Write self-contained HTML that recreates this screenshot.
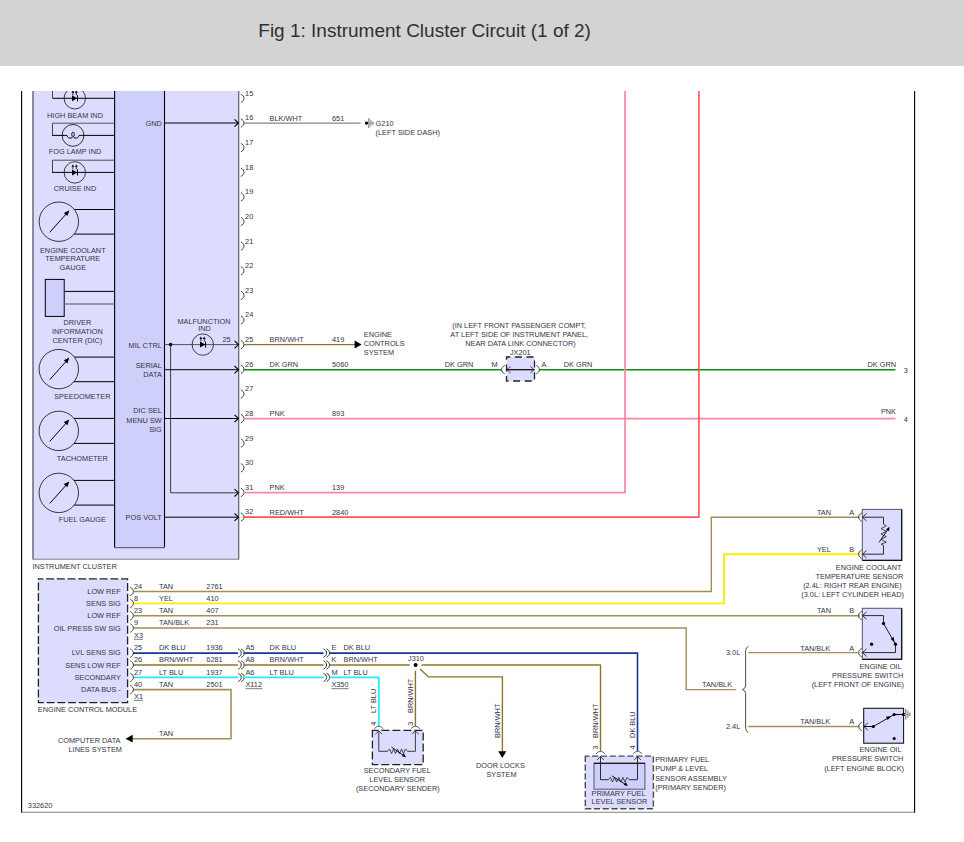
<!DOCTYPE html>
<html><head><meta charset="utf-8"><title>Fig 1: Instrument Cluster Circuit (1 of 2)</title>
<style>
html,body{margin:0;padding:0;background:#fff;}
body{width:964px;height:842px;position:relative;overflow:hidden;font-family:"Liberation Sans",sans-serif;}
#hdr{position:absolute;left:0;top:0;width:964px;height:66px;background:#d3d3d3;}
#hdr span{position:absolute;left:258.3px;top:19.6px;font-size:19px;line-height:22px;color:#303030;white-space:nowrap;}
svg{position:absolute;left:0;top:0;}
svg text{font-family:"Liberation Sans",sans-serif;fill:#343446;}
</style></head><body>
<div id="hdr"><span>Fig 1: Instrument Cluster Circuit (1 of 2)</span></div>
<svg width="964" height="842" viewBox="0 0 964 842">
<defs><clipPath id="clip"><rect x="21" y="91" width="894" height="721.5"/></clipPath></defs>
<g clip-path="url(#clip)">
<rect x="33" y="80" width="205.7" height="479.2" fill="#dcdcfe" stroke="#7c7c8c" stroke-width="1" />
<line x1="33" y1="80" x2="33" y2="559.2" stroke="#6a6a76" stroke-width="1.1" />
<line x1="238.7" y1="80" x2="238.7" y2="559.2" stroke="#666" stroke-width="1" />
<rect x="114.6" y="80" width="49.9" height="467.6" fill="#cfcffb" stroke="none" stroke-width="0" />
<line x1="114.6" y1="80" x2="114.6" y2="547.6" stroke="#000" stroke-width="1.1" />
<line x1="164.5" y1="80" x2="164.5" y2="547.6" stroke="#000" stroke-width="1.1" />
<line x1="114.6" y1="547.6" x2="164.5" y2="547.6" stroke="#666680" stroke-width="1.2" />
<line x1="52.5" y1="88" x2="52.5" y2="98.3" stroke="#333" stroke-width="0.9" />
<line x1="52.5" y1="98.3" x2="114.6" y2="98.3" stroke="#000" stroke-width="1" />
<circle cx="74.8" cy="98.3" r="10.7" fill="none" stroke="#222" stroke-width="0.85"/>
<path d="M72.0,95.3 L72.0,101.3 L77.2,98.3 Z" fill="#000"/>
<line x1="77.5" y1="95.2" x2="77.5" y2="101.39999999999999" stroke="#000" stroke-width="1" />
<line x1="72.89999999999999" y1="95.1" x2="72.89999999999999" y2="91.7" stroke="#000" stroke-width="0.8" />
<path d="M71.49999999999999,92.7 L72.89999999999999,90.3 L74.3,92.7 Z" fill="#000"/>
<line x1="76.3" y1="95.1" x2="76.3" y2="91.7" stroke="#000" stroke-width="0.8" />
<path d="M74.89999999999999,92.7 L76.3,90.3 L77.7,92.7 Z" fill="#000"/>
<text x="75" y="118.25" text-anchor="middle" font-size="7.35" >HIGH BEAM IND</text>
<line x1="52.5" y1="135.4" x2="52.5" y2="123.2" stroke="#333" stroke-width="0.9" />
<line x1="52.1" y1="135.4" x2="64" y2="135.4" stroke="#000" stroke-width="1" />
<line x1="52.5" y1="123.2" x2="114.6" y2="123.2" stroke="#444" stroke-width="0.9" />
<line x1="83" y1="135.4" x2="114.6" y2="135.4" stroke="#000" stroke-width="1" />
<circle cx="73" cy="135.4" r="10.9" fill="none" stroke="#222" stroke-width="0.9"/>
<path d="M62.5,135.4 L67,135.4 C67.5,137.6 69.2,138.5 71,138.1 C72.4,137.8 72.6,137 72.2,136.2 C71.2,134 71.8,132.2 73,132.2 C74.2,132.2 74.8,134 73.8,136.2 C73.4,137 73.6,137.8 75,138.1 C76.8,138.5 78.5,137.6 79,135.4 L84,135.4" fill="none" stroke="#000" stroke-width="0.95"/>
<text x="75" y="154.15" text-anchor="middle" font-size="7.35" >FOG LAMP IND</text>
<line x1="52.5" y1="160.2" x2="52.5" y2="172.4" stroke="#333" stroke-width="0.9" />
<line x1="52.1" y1="172.4" x2="114.6" y2="172.4" stroke="#000" stroke-width="1" />
<line x1="52.5" y1="160.2" x2="114.6" y2="160.2" stroke="#444" stroke-width="0.9" />
<circle cx="74.8" cy="172.4" r="10.7" fill="none" stroke="#222" stroke-width="0.85"/>
<path d="M72.0,169.4 L72.0,175.4 L77.2,172.4 Z" fill="#000"/>
<line x1="77.5" y1="169.3" x2="77.5" y2="175.5" stroke="#000" stroke-width="1" />
<line x1="72.89999999999999" y1="169.20000000000002" x2="72.89999999999999" y2="165.8" stroke="#000" stroke-width="0.8" />
<path d="M71.49999999999999,166.8 L72.89999999999999,164.4 L74.3,166.8 Z" fill="#000"/>
<line x1="76.3" y1="169.20000000000002" x2="76.3" y2="165.8" stroke="#000" stroke-width="0.8" />
<path d="M74.89999999999999,166.8 L76.3,164.4 L77.7,166.8 Z" fill="#000"/>
<text x="75" y="191.05" text-anchor="middle" font-size="7.35" >CRUISE IND</text>
<circle cx="58.85" cy="221.7" r="19.7" fill="none" stroke="#222" stroke-width="0.9"/>
<line x1="74.31770829825803" y1="209.5" x2="114.6" y2="209.5" stroke="#000" stroke-width="1" />
<line x1="74.15784112799712" y1="234.1" x2="114.6" y2="234.1" stroke="#000" stroke-width="1" />
<line x1="49.85" y1="232.2" x2="66.85" y2="213.2" stroke="#000" stroke-width="1" />
<path d="M69.35,210.2 L63.85,212.89999999999998 L67.45,216.1 Z" fill="#000"/>
<text x="72.8" y="252.55" text-anchor="middle" font-size="7.35" >ENGINE COOLANT</text>
<text x="72.8" y="261.45" text-anchor="middle" font-size="7.35" >TEMPERATURE</text>
<text x="72.8" y="270.15" text-anchor="middle" font-size="7.35" >GAUGE</text>
<rect x="45.3" y="279.4" width="18.9" height="37" fill="#cfcffb" stroke="#000" stroke-width="1" />
<line x1="64.2" y1="291.4" x2="114.6" y2="291.4" stroke="#000" stroke-width="1" />
<line x1="64.2" y1="304" x2="114.6" y2="304" stroke="#555" stroke-width="1.1" />
<text x="77.4" y="325.25" text-anchor="middle" font-size="7.35" >DRIVER</text>
<text x="77.4" y="334.45" text-anchor="middle" font-size="7.35" >INFORMATION</text>
<text x="77.4" y="343.35" text-anchor="middle" font-size="7.35" >CENTER (DIC)</text>
<circle cx="58.8" cy="369.1" r="19.7" fill="none" stroke="#222" stroke-width="0.9"/>
<line x1="74.42337991601049" y1="357.1" x2="114.6" y2="357.1" stroke="#000" stroke-width="1" />
<line x1="73.94364553203755" y1="381.7" x2="114.6" y2="381.7" stroke="#000" stroke-width="1" />
<line x1="49.8" y1="379.6" x2="66.8" y2="360.6" stroke="#000" stroke-width="1" />
<path d="M69.3,357.6 L63.8,360.3 L67.39999999999999,363.5 Z" fill="#000"/>
<text x="82.3" y="399.15" text-anchor="middle" font-size="7.35" >SPEEDOMETER</text>
<circle cx="58.8" cy="430.9" r="19.7" fill="none" stroke="#222" stroke-width="0.9"/>
<line x1="74.02629304853942" y1="418.4" x2="114.6" y2="418.4" stroke="#000" stroke-width="1" />
<line x1="74.02629304853942" y1="443.4" x2="114.6" y2="443.4" stroke="#000" stroke-width="1" />
<line x1="49.8" y1="441.4" x2="66.8" y2="422.4" stroke="#000" stroke-width="1" />
<path d="M69.3,419.4 L63.8,422.09999999999997 L67.39999999999999,425.29999999999995 Z" fill="#000"/>
<text x="82.3" y="461.15" text-anchor="middle" font-size="7.35" >TACHOMETER</text>
<circle cx="58.8" cy="492.9" r="19.7" fill="none" stroke="#222" stroke-width="0.9"/>
<line x1="74.02629304853942" y1="480.4" x2="114.6" y2="480.4" stroke="#000" stroke-width="1" />
<line x1="74.26770829825799" y1="505.1" x2="114.6" y2="505.1" stroke="#000" stroke-width="1" />
<line x1="49.8" y1="503.4" x2="66.8" y2="484.4" stroke="#000" stroke-width="1" />
<path d="M69.3,481.4 L63.8,484.09999999999997 L67.39999999999999,487.29999999999995 Z" fill="#000"/>
<text x="82.3" y="522.25" text-anchor="middle" font-size="7.35" >FUEL GAUGE</text>
<text x="32.4" y="569.15" text-anchor="start" font-size="7.35" >INSTRUMENT CLUSTER</text>
<text x="161.8" y="125.65" text-anchor="end" font-size="7.35" >GND</text>
<line x1="164.5" y1="123" x2="238" y2="123" stroke="#000" stroke-width="1" />
<polyline points="234.5,119.3 238.5,123 234.5,126.7" fill="none" stroke="#000" stroke-width="1.1" />
<text x="161.8" y="348.15" text-anchor="end" font-size="7.35" >MIL CTRL</text>
<line x1="164.5" y1="344.6" x2="238" y2="344.6" stroke="#444" stroke-width="0.9" />
<polyline points="234.5,340.90000000000003 238.5,344.6 234.5,348.3" fill="none" stroke="#000" stroke-width="1.1" />
<circle cx="170.6" cy="344.6" r="1.8" fill="#000" stroke="#000" stroke-width="0"/>
<polyline points="170.6,344.6 170.6,492.8 238,492.8" fill="none" stroke="#333" stroke-width="0.95" />
<polyline points="234.5,489.1 238.5,492.8 234.5,496.5" fill="none" stroke="#000" stroke-width="1.1" />
<text x="204" y="323.85" text-anchor="middle" font-size="7.35" >MALFUNCTION</text>
<text x="204.5" y="331.25" text-anchor="middle" font-size="7.35" >IND</text>
<circle cx="202.8" cy="344.6" r="10.7" fill="none" stroke="#222" stroke-width="0.85"/>
<path d="M200.0,341.6 L200.0,347.6 L205.20000000000002,344.6 Z" fill="#000"/>
<line x1="205.5" y1="341.5" x2="205.5" y2="347.70000000000005" stroke="#000" stroke-width="1" />
<line x1="200.9" y1="341.40000000000003" x2="200.9" y2="338.0" stroke="#000" stroke-width="0.8" />
<path d="M199.5,339.0 L200.9,336.6 L202.3,339.0 Z" fill="#000"/>
<line x1="204.3" y1="341.40000000000003" x2="204.3" y2="338.0" stroke="#000" stroke-width="0.8" />
<path d="M202.9,339.0 L204.3,336.6 L205.70000000000002,339.0 Z" fill="#000"/>
<text x="226.5" y="342.25" text-anchor="middle" font-size="7.35" >25</text>
<text x="161.8" y="368.35" text-anchor="end" font-size="7.35" >SERIAL</text>
<text x="161.8" y="377.15" text-anchor="end" font-size="7.35" >DATA</text>
<line x1="164.5" y1="369.7" x2="238" y2="369.7" stroke="#000" stroke-width="1" />
<polyline points="234.5,366.0 238.5,369.7 234.5,373.4" fill="none" stroke="#000" stroke-width="1.1" />
<text x="161.8" y="413.45" text-anchor="end" font-size="7.35" >DIC SEL</text>
<text x="161.8" y="422.85" text-anchor="end" font-size="7.35" >MENU SW</text>
<text x="161.8" y="432.35" text-anchor="end" font-size="7.35" >SIG</text>
<line x1="164.5" y1="418.5" x2="238" y2="418.5" stroke="#000" stroke-width="1" />
<polyline points="234.5,414.8 238.5,418.5 234.5,422.2" fill="none" stroke="#000" stroke-width="1.1" />
<text x="161.8" y="520.05" text-anchor="end" font-size="7.35" >POS VOLT</text>
<line x1="164.5" y1="517.2" x2="238" y2="517.2" stroke="#000" stroke-width="1" />
<polyline points="234.5,513.5 238.5,517.2 234.5,520.9000000000001" fill="none" stroke="#000" stroke-width="1.1" />
<path d="M240.9,94.17 C242.8,95.17 244.0,96.57000000000001 244.0,98.37 C244.0,100.17 242.8,101.57000000000001 240.9,102.57000000000001" fill="none" stroke="#333" stroke-width="0.95"/>
<text x="245.1" y="95.72" text-anchor="start" font-size="7.35" >15</text>
<path d="M240.9,118.8 C242.8,119.8 244.0,121.2 244.0,123.0 C244.0,124.8 242.8,126.2 240.9,127.2" fill="none" stroke="#333" stroke-width="0.95"/>
<text x="245.1" y="120.35" text-anchor="start" font-size="7.35" >16</text>
<path d="M240.9,143.43 C242.8,144.43 244.0,145.82999999999998 244.0,147.63 C244.0,149.43 242.8,150.82999999999998 240.9,151.82999999999998" fill="none" stroke="#333" stroke-width="0.95"/>
<text x="245.1" y="144.98" text-anchor="start" font-size="7.35" >17</text>
<path d="M240.9,168.06 C242.8,169.06 244.0,170.45999999999998 244.0,172.26 C244.0,174.06 242.8,175.45999999999998 240.9,176.45999999999998" fill="none" stroke="#333" stroke-width="0.95"/>
<text x="245.1" y="169.61" text-anchor="start" font-size="7.35" >18</text>
<path d="M240.9,192.69 C242.8,193.69 244.0,195.08999999999997 244.0,196.89 C244.0,198.69 242.8,200.08999999999997 240.9,201.08999999999997" fill="none" stroke="#333" stroke-width="0.95"/>
<text x="245.1" y="194.24" text-anchor="start" font-size="7.35" >19</text>
<path d="M240.9,217.32 C242.8,218.32 244.0,219.71999999999997 244.0,221.51999999999998 C244.0,223.32 242.8,224.71999999999997 240.9,225.71999999999997" fill="none" stroke="#333" stroke-width="0.95"/>
<text x="245.1" y="218.87" text-anchor="start" font-size="7.35" >20</text>
<path d="M240.9,241.95 C242.8,242.95 244.0,244.34999999999997 244.0,246.14999999999998 C244.0,247.95 242.8,249.34999999999997 240.9,250.34999999999997" fill="none" stroke="#333" stroke-width="0.95"/>
<text x="245.1" y="243.5" text-anchor="start" font-size="7.35" >21</text>
<path d="M240.9,266.58 C242.8,267.58 244.0,268.97999999999996 244.0,270.78 C244.0,272.58 242.8,273.97999999999996 240.9,274.97999999999996" fill="none" stroke="#333" stroke-width="0.95"/>
<text x="245.1" y="268.13" text-anchor="start" font-size="7.35" >22</text>
<path d="M240.9,291.21 C242.8,292.21 244.0,293.60999999999996 244.0,295.40999999999997 C244.0,297.21 242.8,298.60999999999996 240.9,299.60999999999996" fill="none" stroke="#333" stroke-width="0.95"/>
<text x="245.1" y="292.76" text-anchor="start" font-size="7.35" >23</text>
<path d="M240.9,315.84 C242.8,316.84 244.0,318.23999999999995 244.0,320.03999999999996 C244.0,321.84 242.8,323.23999999999995 240.9,324.23999999999995" fill="none" stroke="#333" stroke-width="0.95"/>
<text x="245.1" y="317.39" text-anchor="start" font-size="7.35" >24</text>
<path d="M240.9,340.46999999999997 C242.8,341.46999999999997 244.0,342.86999999999995 244.0,344.66999999999996 C244.0,346.46999999999997 242.8,347.86999999999995 240.9,348.86999999999995" fill="none" stroke="#333" stroke-width="0.95"/>
<text x="245.1" y="342.02" text-anchor="start" font-size="7.35" >25</text>
<path d="M240.9,365.09999999999997 C242.8,366.09999999999997 244.0,367.49999999999994 244.0,369.29999999999995 C244.0,371.09999999999997 242.8,372.49999999999994 240.9,373.49999999999994" fill="none" stroke="#333" stroke-width="0.95"/>
<text x="245.1" y="366.65" text-anchor="start" font-size="7.35" >26</text>
<path d="M240.9,389.73 C242.8,390.73 244.0,392.13 244.0,393.93 C244.0,395.73 242.8,397.13 240.9,398.13" fill="none" stroke="#333" stroke-width="0.95"/>
<text x="245.1" y="391.28" text-anchor="start" font-size="7.35" >27</text>
<path d="M240.9,414.36 C242.8,415.36 244.0,416.76 244.0,418.56 C244.0,420.36 242.8,421.76 240.9,422.76" fill="none" stroke="#333" stroke-width="0.95"/>
<text x="245.1" y="415.91" text-anchor="start" font-size="7.35" >28</text>
<path d="M240.9,438.99 C242.8,439.99 244.0,441.39 244.0,443.19 C244.0,444.99 242.8,446.39 240.9,447.39" fill="none" stroke="#333" stroke-width="0.95"/>
<text x="245.1" y="440.54" text-anchor="start" font-size="7.35" >29</text>
<path d="M240.9,463.62 C242.8,464.62 244.0,466.02 244.0,467.82 C244.0,469.62 242.8,471.02 240.9,472.02" fill="none" stroke="#333" stroke-width="0.95"/>
<text x="245.1" y="465.17" text-anchor="start" font-size="7.35" >30</text>
<path d="M240.9,488.25 C242.8,489.25 244.0,490.65 244.0,492.45 C244.0,494.25 242.8,495.65 240.9,496.65" fill="none" stroke="#333" stroke-width="0.95"/>
<text x="245.1" y="489.8" text-anchor="start" font-size="7.35" >31</text>
<path d="M240.9,512.8799999999999 C242.8,513.8799999999999 244.0,515.28 244.0,517.0799999999999 C244.0,518.8799999999999 242.8,520.28 240.9,521.28" fill="none" stroke="#333" stroke-width="0.95"/>
<text x="245.1" y="514.43" text-anchor="start" font-size="7.35" >32</text>
<line x1="243.5" y1="123.1" x2="360.7" y2="123.1" stroke="#858585" stroke-width="1.3" />
<text x="269.6" y="120.75" text-anchor="start" font-size="7.35" >BLK/WHT</text>
<text x="332" y="120.75" text-anchor="start" font-size="7.35" >651</text>
<circle cx="366.5" cy="123.1" r="1.7" fill="#000" stroke="#000" stroke-width="0"/>
<line x1="368" y1="123.1" x2="373" y2="123.1" stroke="#999" stroke-width="1" />
<line x1="368.9" y1="118.2" x2="368.9" y2="128" stroke="#8c8c8c" stroke-width="1.4" />
<line x1="370.9" y1="119.8" x2="370.9" y2="126.4" stroke="#a0a0a0" stroke-width="1.3" />
<line x1="372.9" y1="121.4" x2="372.9" y2="124.8" stroke="#8c8c8c" stroke-width="1.4" />
<text x="375.6" y="126.35" text-anchor="start" font-size="7.35" >G210</text>
<text x="375.6" y="135.25" text-anchor="start" font-size="7.35" >(LEFT SIDE DASH)</text>
<line x1="243.5" y1="344.6" x2="355" y2="344.6" stroke="#8e7526" stroke-width="1.3" />
<text x="269.6" y="342.05" text-anchor="start" font-size="7.35" >BRN/WHT</text>
<text x="332" y="342.05" text-anchor="start" font-size="7.35" >419</text>
<path d="M354.6,340.6 L361.6,344.6 L354.6,348.6 Z" fill="#000"/>
<text x="363.8" y="337.15" text-anchor="start" font-size="7.35" >ENGINE</text>
<text x="363.8" y="346.05" text-anchor="start" font-size="7.35" >CONTROLS</text>
<text x="363.8" y="355.25" text-anchor="start" font-size="7.35" >SYSTEM</text>
<line x1="243.5" y1="369.7" x2="501.6" y2="369.7" stroke="#0c8c0c" stroke-width="1.5" />
<line x1="539.4" y1="369.7" x2="895.5" y2="369.7" stroke="#0c8c0c" stroke-width="1.5" />
<text x="269.6" y="367.15" text-anchor="start" font-size="7.35" >DK GRN</text>
<text x="332" y="367.15" text-anchor="start" font-size="7.35" >5060</text>
<text x="444.8" y="367.45" text-anchor="start" font-size="7.35" >DK GRN</text>
<text x="563.7" y="367.45" text-anchor="start" font-size="7.35" >DK GRN</text>
<text x="896" y="367.45" text-anchor="end" font-size="7.35" >DK GRN</text>
<text x="903.8" y="373.45" text-anchor="start" font-size="7.35" >3</text>
<text x="491.5" y="367.45" text-anchor="start" font-size="7.35" >M</text>
<text x="541.4" y="367.45" text-anchor="start" font-size="7.35" >A</text>
<text x="519.2" y="328.25" text-anchor="middle" font-size="7.35" >(IN LEFT FRONT PASSENGER COMPT,</text>
<text x="519.2" y="337.15" text-anchor="middle" font-size="7.35" >AT LEFT SIDE OF INSTRUMENT PANEL,</text>
<text x="520.5" y="346.05" text-anchor="middle" font-size="7.35" >NEAR DATA LINK CONNECTOR)</text>
<text x="520.3" y="355.35" text-anchor="middle" font-size="7.35" >JX201</text>
<rect x="506.5" y="357" width="28" height="24" fill="#dcdcfe" stroke="#222" stroke-width="1.3" stroke-dasharray="7,4.6" stroke-dashoffset="3.2"/>
<line x1="506.5" y1="369.7" x2="534.5" y2="369.7" stroke="#000" stroke-width="1.2" />
<polyline points="510.6,366.5 506.8,369.7 510.6,372.9" fill="none" stroke="#333" stroke-width="0.9" />
<polyline points="530.4,366.5 534.2,369.7 530.4,372.9" fill="none" stroke="#333" stroke-width="0.9" />
<path d="M504.7,365.5 C502.8,366.5 501.59999999999997,367.9 501.59999999999997,369.7 C501.59999999999997,371.5 502.8,372.9 504.7,373.9" fill="none" stroke="#333" stroke-width="0.95"/>
<path d="M536.3,365.5 C538.1999999999999,366.5 539.4,367.9 539.4,369.7 C539.4,371.5 538.1999999999999,372.9 536.3,373.9" fill="none" stroke="#333" stroke-width="0.95"/>
<line x1="243.5" y1="418.6" x2="895.5" y2="418.6" stroke="#ff85a2" stroke-width="1.6" />
<text x="269.6" y="415.95" text-anchor="start" font-size="7.35" >PNK</text>
<text x="332" y="415.95" text-anchor="start" font-size="7.35" >893</text>
<text x="896" y="414.05" text-anchor="end" font-size="7.35" >PNK</text>
<text x="903.8" y="422.15" text-anchor="start" font-size="7.35" >4</text>
<polyline points="243.5,492.7 625,492.7 625,91" fill="none" stroke="#ff85a2" stroke-width="1.7" />
<text x="269.6" y="489.95" text-anchor="start" font-size="7.35" >PNK</text>
<text x="332" y="489.95" text-anchor="start" font-size="7.35" >139</text>
<polyline points="243.5,517.1 698.9,517.1 698.9,91" fill="none" stroke="#ff5252" stroke-width="1.6" />
<text x="269.6" y="514.75" text-anchor="start" font-size="7.35" >RED/WHT</text>
<text x="332" y="514.75" text-anchor="start" font-size="7.35" >2840</text>
<rect x="38.4" y="578.9" width="89.2" height="123.7" fill="#dcdcfe" stroke="#222" stroke-width="1.3" stroke-dasharray="8,2.7" stroke-dashoffset="3"/>
<text x="120.8" y="594.25" text-anchor="end" font-size="7.35" >LOW REF</text>
<text x="120.8" y="606.15" text-anchor="end" font-size="7.35" >SENS SIG</text>
<text x="120.8" y="618.25" text-anchor="end" font-size="7.35" >LOW REF</text>
<text x="120.8" y="631.25" text-anchor="end" font-size="7.35" >OIL PRESS SW SIG</text>
<text x="120.8" y="655.25" text-anchor="end" font-size="7.35" >LVL SENS SIG</text>
<text x="120.8" y="668.15" text-anchor="end" font-size="7.35" >SENS LOW REF</text>
<text x="120.8" y="680.05" text-anchor="end" font-size="7.35" >SECONDARY</text>
<text x="120.8" y="692.25" text-anchor="end" font-size="7.35" >DATA BUS -</text>
<text x="37.8" y="711.95" text-anchor="start" font-size="7.35" >ENGINE CONTROL MODULE</text>
<polyline points="133.8,591.5 711.3,591.5 711.3,517.2 859.6,517.2" fill="none" stroke="#a38f55" stroke-width="1.4" />
<path d="M130.3,587.3 C132.20000000000002,588.3 133.4,589.7 133.4,591.5 C133.4,593.3 132.20000000000002,594.7 130.3,595.7" fill="none" stroke="#333" stroke-width="0.95"/>
<text x="134" y="588.95" text-anchor="start" font-size="7.35" >24</text>
<text x="159" y="588.95" text-anchor="start" font-size="7.35" >TAN</text>
<text x="206.3" y="588.95" text-anchor="start" font-size="7.35" >2761</text>
<polyline points="133.8,603.4 724.1,603.4 724.1,554.2 859.6,554.2" fill="none" stroke="#ffee00" stroke-width="1.9" />
<path d="M130.3,599.1999999999999 C132.20000000000002,600.1999999999999 133.4,601.6 133.4,603.4 C133.4,605.1999999999999 132.20000000000002,606.6 130.3,607.6" fill="none" stroke="#333" stroke-width="0.95"/>
<text x="134" y="600.85" text-anchor="start" font-size="7.35" >8</text>
<text x="159" y="600.85" text-anchor="start" font-size="7.35" >YEL</text>
<text x="206.3" y="600.85" text-anchor="start" font-size="7.35" >410</text>
<line x1="133.8" y1="615.7" x2="859.6" y2="615.7" stroke="#a38f55" stroke-width="1.4" />
<path d="M130.3,611.5 C132.20000000000002,612.5 133.4,613.9000000000001 133.4,615.7 C133.4,617.5 132.20000000000002,618.9000000000001 130.3,619.9000000000001" fill="none" stroke="#333" stroke-width="0.95"/>
<text x="134" y="613.15" text-anchor="start" font-size="7.35" >23</text>
<text x="159" y="613.15" text-anchor="start" font-size="7.35" >TAN</text>
<text x="206.3" y="613.15" text-anchor="start" font-size="7.35" >407</text>
<polyline points="133.8,628 686.2,628 686.2,689.6 735.8,689.6" fill="none" stroke="#a38f55" stroke-width="1.4" />
<path d="M130.3,623.8 C132.20000000000002,624.8 133.4,626.2 133.4,628 C133.4,629.8 132.20000000000002,631.2 130.3,632.2" fill="none" stroke="#333" stroke-width="0.95"/>
<text x="134" y="625.45" text-anchor="start" font-size="7.35" >9</text>
<text x="159" y="625.45" text-anchor="start" font-size="7.35" >TAN/BLK</text>
<text x="206.3" y="625.45" text-anchor="start" font-size="7.35" >231</text>
<text x="134" y="638.05" text-anchor="start" font-size="7.35" >X3</text>
<line x1="134" y1="639.3" x2="142.99" y2="639.3" stroke="#50505e" stroke-width="0.75" />
<line x1="133" y1="653.1" x2="238" y2="653.1" stroke="#16389c" stroke-width="1.6" />
<path d="M130.3,648.9 C132.20000000000002,649.9 133.4,651.3000000000001 133.4,653.1 C133.4,654.9 132.20000000000002,656.3000000000001 130.3,657.3000000000001" fill="none" stroke="#333" stroke-width="0.95"/>
<text x="134" y="650.05" text-anchor="start" font-size="7.35" >25</text>
<text x="159" y="650.05" text-anchor="start" font-size="7.35" >DK BLU</text>
<text x="206.3" y="650.05" text-anchor="start" font-size="7.35" >1936</text>
<line x1="133" y1="665" x2="238" y2="665" stroke="#8e7526" stroke-width="1.5" />
<path d="M130.3,660.8 C132.20000000000002,661.8 133.4,663.2 133.4,665 C133.4,666.8 132.20000000000002,668.2 130.3,669.2" fill="none" stroke="#333" stroke-width="0.95"/>
<text x="134" y="662.45" text-anchor="start" font-size="7.35" >26</text>
<text x="159" y="662.45" text-anchor="start" font-size="7.35" >BRN/WHT</text>
<text x="206.3" y="662.45" text-anchor="start" font-size="7.35" >6281</text>
<line x1="133" y1="677.4" x2="238" y2="677.4" stroke="#20ecf6" stroke-width="1.7" />
<path d="M130.3,673.1999999999999 C132.20000000000002,674.1999999999999 133.4,675.6 133.4,677.4 C133.4,679.1999999999999 132.20000000000002,680.6 130.3,681.6" fill="none" stroke="#333" stroke-width="0.95"/>
<text x="134" y="674.85" text-anchor="start" font-size="7.35" >27</text>
<text x="159" y="674.85" text-anchor="start" font-size="7.35" >LT BLU</text>
<text x="206.3" y="674.85" text-anchor="start" font-size="7.35" >1937</text>
<polyline points="133,689.6 231,689.6 231,738.7 132,738.7" fill="none" stroke="#a38f55" stroke-width="1.6" />
<path d="M130.3,685.4 C132.20000000000002,686.4 133.4,687.8000000000001 133.4,689.6 C133.4,691.4 132.20000000000002,692.8000000000001 130.3,693.8000000000001" fill="none" stroke="#333" stroke-width="0.95"/>
<text x="134" y="687.05" text-anchor="start" font-size="7.35" >40</text>
<text x="159" y="687.05" text-anchor="start" font-size="7.35" >TAN</text>
<text x="206.3" y="687.05" text-anchor="start" font-size="7.35" >2501</text>
<text x="134" y="699.15" text-anchor="start" font-size="7.35" >X1</text>
<line x1="134" y1="700.4" x2="142.99" y2="700.4" stroke="#50505e" stroke-width="0.75" />
<path d="M132.7,734.8 L125.6,738.7 L132.7,742.6 Z" fill="#000"/>
<text x="159" y="736.15" text-anchor="start" font-size="7.35" >TAN</text>
<text x="120.5" y="743.15" text-anchor="end" font-size="7.35" >COMPUTER DATA</text>
<text x="122" y="752.05" text-anchor="end" font-size="7.35" >LINES SYSTEM</text>
<text x="27.8" y="808.15" text-anchor="start" font-size="7.35" >332620</text>
<path d="M238.2,648.9 C240.1,649.9 241.29999999999998,651.3000000000001 241.29999999999998,653.1 C241.29999999999998,654.9 240.1,656.3000000000001 238.2,657.3000000000001" fill="none" stroke="#222" stroke-width="0.95"/>
<path d="M241.2,648.9 C243.1,649.9 244.29999999999998,651.3000000000001 244.29999999999998,653.1 C244.29999999999998,654.9 243.1,656.3000000000001 241.2,657.3000000000001" fill="none" stroke="#222" stroke-width="0.95"/>
<path d="M238.2,660.8 C240.1,661.8 241.29999999999998,663.2 241.29999999999998,665 C241.29999999999998,666.8 240.1,668.2 238.2,669.2" fill="none" stroke="#222" stroke-width="0.95"/>
<path d="M241.2,660.8 C243.1,661.8 244.29999999999998,663.2 244.29999999999998,665 C244.29999999999998,666.8 243.1,668.2 241.2,669.2" fill="none" stroke="#222" stroke-width="0.95"/>
<path d="M238.2,673.1999999999999 C240.1,674.1999999999999 241.29999999999998,675.6 241.29999999999998,677.4 C241.29999999999998,679.1999999999999 240.1,680.6 238.2,681.6" fill="none" stroke="#222" stroke-width="0.95"/>
<path d="M241.2,673.1999999999999 C243.1,674.1999999999999 244.29999999999998,675.6 244.29999999999998,677.4 C244.29999999999998,679.1999999999999 243.1,680.6 241.2,681.6" fill="none" stroke="#222" stroke-width="0.95"/>
<path d="M323.5,648.9 C325.4,649.9 326.6,651.3000000000001 326.6,653.1 C326.6,654.9 325.4,656.3000000000001 323.5,657.3000000000001" fill="none" stroke="#222" stroke-width="0.95"/>
<path d="M326.5,648.9 C328.4,649.9 329.6,651.3000000000001 329.6,653.1 C329.6,654.9 328.4,656.3000000000001 326.5,657.3000000000001" fill="none" stroke="#222" stroke-width="0.95"/>
<path d="M323.5,660.8 C325.4,661.8 326.6,663.2 326.6,665 C326.6,666.8 325.4,668.2 323.5,669.2" fill="none" stroke="#222" stroke-width="0.95"/>
<path d="M326.5,660.8 C328.4,661.8 329.6,663.2 329.6,665 C329.6,666.8 328.4,668.2 326.5,669.2" fill="none" stroke="#222" stroke-width="0.95"/>
<path d="M323.5,673.1999999999999 C325.4,674.1999999999999 326.6,675.6 326.6,677.4 C326.6,679.1999999999999 325.4,680.6 323.5,681.6" fill="none" stroke="#222" stroke-width="0.95"/>
<path d="M326.5,673.1999999999999 C328.4,674.1999999999999 329.6,675.6 329.6,677.4 C329.6,679.1999999999999 328.4,680.6 326.5,681.6" fill="none" stroke="#222" stroke-width="0.95"/>
<text x="245.4" y="650.05" text-anchor="start" font-size="7.35" >A5</text>
<text x="269.6" y="650.05" text-anchor="start" font-size="7.35" >DK BLU</text>
<text x="331.4" y="650.05" text-anchor="start" font-size="7.35" >E</text>
<text x="343.5" y="650.05" text-anchor="start" font-size="7.35" >DK BLU</text>
<text x="245.4" y="662.45" text-anchor="start" font-size="7.35" >A8</text>
<text x="269.6" y="662.45" text-anchor="start" font-size="7.35" >BRN/WHT</text>
<text x="331.4" y="662.45" text-anchor="start" font-size="7.35" >K</text>
<text x="343.5" y="662.45" text-anchor="start" font-size="7.35" >BRN/WHT</text>
<text x="245.4" y="674.85" text-anchor="start" font-size="7.35" >A6</text>
<text x="269.6" y="674.85" text-anchor="start" font-size="7.35" >LT BLU</text>
<text x="331.4" y="674.85" text-anchor="start" font-size="7.35" >M</text>
<text x="343.5" y="674.85" text-anchor="start" font-size="7.35" >LT BLU</text>
<text x="245.4" y="687.45" text-anchor="start" font-size="7.35" >X112</text>
<line x1="245.4" y1="688.6999999999999" x2="262.56" y2="688.6999999999999" stroke="#50505e" stroke-width="0.75" />
<text x="331.4" y="687.45" text-anchor="start" font-size="7.35" >X350</text>
<line x1="331.4" y1="688.6999999999999" x2="348.56" y2="688.6999999999999" stroke="#50505e" stroke-width="0.75" />
<line x1="243.5" y1="653.1" x2="323.5" y2="653.1" stroke="#16389c" stroke-width="1.6" />
<line x1="243.5" y1="665" x2="323.5" y2="665" stroke="#8e7526" stroke-width="1.5" />
<line x1="243.5" y1="677.4" x2="323.5" y2="677.4" stroke="#20ecf6" stroke-width="1.7" />
<polyline points="329.5,653.1 637.5,653.1 637.5,751.3" fill="none" stroke="#16389c" stroke-width="1.6" />
<line x1="329.5" y1="665" x2="409.8" y2="665" stroke="#8e7526" stroke-width="1.4" />
<polyline points="421.4,665 600.5,665 600.5,751.3" fill="none" stroke="#8e7526" stroke-width="1.4" />
<polyline points="329.5,677.4 378.8,677.4 378.8,726.2" fill="none" stroke="#20ecf6" stroke-width="1.8" />
<line x1="415.4" y1="670.7" x2="415.4" y2="726.2" stroke="#8e7526" stroke-width="1.4" />
<circle cx="415.6" cy="664.9" r="2" fill="#000" stroke="#000" stroke-width="0"/>
<text x="408" y="661.25" text-anchor="start" font-size="7.35" >J310</text>
<polyline points="420.1,669 428.4,676.9 502.4,676.9 502.4,752" fill="none" stroke="#8e7526" stroke-width="1.4" />
<path d="M498.2,751.3 L506.4,751.3 L502.3,758 Z" fill="#000"/>
<text transform="translate(499.55,737.9) rotate(-90)" font-size="7.35">BRN/WHT</text>
<text x="500.4" y="768.25" text-anchor="middle" font-size="7.35" >DOOR LOCKS</text>
<text x="501.5" y="777.25" text-anchor="middle" font-size="7.35" >SYSTEM</text>
<text transform="translate(376.35,713) rotate(-90)" font-size="7.35">LT BLU</text>
<text transform="translate(413.35,713) rotate(-90)" font-size="7.35">BRN/WHT</text>
<text transform="translate(376.35,725.8) rotate(-90)" font-size="7.35">4</text>
<text transform="translate(413.35,725.8) rotate(-90)" font-size="7.35">3</text>
<rect x="372.4" y="730.4" width="50.8" height="34.2" fill="#dcdcfe" stroke="#222" stroke-width="1.3" stroke-dasharray="8,3" stroke-dashoffset="2"/>
<path d="M374.2,728.8000000000001 Q376.40000000000003,726.2 378.8,726.2 Q381.2,726.2 383.40000000000003,728.8000000000001" fill="none" stroke="#555" stroke-width="0.9"/>
<path d="M410.79999999999995,728.8000000000001 Q413.0,726.2 415.4,726.2 Q417.79999999999995,726.2 420.0,728.8000000000001" fill="none" stroke="#555" stroke-width="0.9"/>
<polyline points="378.8,731 378.8,751.3 387.6,751.3" fill="none" stroke="#333" stroke-width="0.95" />
<polyline points="415.4,731 415.4,751.3 407.5,751.3" fill="none" stroke="#333" stroke-width="0.95" />
<polyline points="387.6,751.3 389.59,749.0 391.58,753.5999999999999 393.57,749.0 395.56,753.5999999999999 397.55,749.0 399.54,753.5999999999999 401.53,749.0 403.52,753.5999999999999 405.51,749.0 407.5,751.3" fill="none" stroke="#222" stroke-width="0.8" />
<polyline points="375.40000000000003,734.2 378.8,730.8 382.2,734.2" fill="none" stroke="#333" stroke-width="0.9" />
<polyline points="412.0,734.2 415.4,730.8 418.79999999999995,734.2" fill="none" stroke="#333" stroke-width="0.9" />
<line x1="391.4" y1="747" x2="404.6" y2="756.2" stroke="#000" stroke-width="0.9" />
<path d="M406,757.2 L401.8,756.3 L404,753.4 Z" fill="#000"/>
<text x="397.2" y="772.85" text-anchor="middle" font-size="7.35" >SECONDARY FUEL</text>
<text x="397.2" y="782.05" text-anchor="middle" font-size="7.35" >LEVEL SENSOR</text>
<text x="397.8" y="791.35" text-anchor="middle" font-size="7.35" >(SECONDARY SENDER)</text>
<rect x="585.3" y="756.1" width="68.1" height="52.6" fill="#dcdcfe" stroke="#4a4a55" stroke-width="1.4" stroke-dasharray="6.2,2.6" stroke-dashoffset="2"/>
<rect x="594" y="763.3" width="50.9" height="25.9" fill="#cfcffb" stroke="#555566" stroke-width="1" />
<line x1="594" y1="763.3" x2="644.9" y2="763.3" stroke="#000" stroke-width="1.1" />
<path d="M595.9,753.9 Q598.1,751.3 600.5,751.3 Q602.9,751.3 605.1,753.9" fill="none" stroke="#555" stroke-width="0.9"/>
<path d="M632.9,753.9 Q635.1,751.3 637.5,751.3 Q639.9,751.3 642.1,753.9" fill="none" stroke="#555" stroke-width="0.9"/>
<polyline points="597.1,760 600.5,756.6 603.9,760" fill="none" stroke="#333" stroke-width="0.9" />
<polyline points="634.1,760 637.5,756.6 640.9,760" fill="none" stroke="#333" stroke-width="0.9" />
<polyline points="600.5,756.6 600.5,779.7 608.3,779.7" fill="none" stroke="#222" stroke-width="0.95" />
<polyline points="637.5,756.6 637.5,779.7 629.2,779.7" fill="none" stroke="#222" stroke-width="0.95" />
<polyline points="608.3,779.7 610.39,777.4000000000001 612.48,782.0 614.57,777.4000000000001 616.66,782.0 618.75,777.4000000000001 620.84,782.0 622.93,777.4000000000001 625.02,782.0 627.11,777.4000000000001 629.2,779.7" fill="none" stroke="#222" stroke-width="0.8" />
<line x1="612" y1="775.9" x2="626.4" y2="785" stroke="#000" stroke-width="0.9" />
<path d="M627.8,785.9 L623.6,785 L625.8,782.1 Z" fill="#000"/>
<text x="591.6" y="796.25" text-anchor="start" font-size="7.35" >PRIMARY FUEL</text>
<text x="591.6" y="804.25" text-anchor="start" font-size="7.35" >LEVEL SENSOR</text>
<text transform="translate(597.95,737.9) rotate(-90)" font-size="7.35">BRN/WHT</text>
<text transform="translate(635.15,737.9) rotate(-90)" font-size="7.35">DK BLU</text>
<text transform="translate(597.95,749.6) rotate(-90)" font-size="7.35">3</text>
<text transform="translate(635.15,749.6) rotate(-90)" font-size="7.35">4</text>
<text x="655.2" y="761.85" text-anchor="start" font-size="7.35" >PRIMARY FUEL</text>
<text x="655.2" y="770.95" text-anchor="start" font-size="7.35" >PUMP &amp; LEVEL</text>
<text x="655.2" y="780.55" text-anchor="start" font-size="7.35" >SENSOR ASSEMBLY</text>
<text x="655.2" y="789.95" text-anchor="start" font-size="7.35" >(PRIMARY SENDER)</text>
<rect x="862.3" y="509.4" width="39.4" height="51" fill="#dcdcfe" stroke="#55556a" stroke-width="1" />
<polyline points="901.6999999999999,509.4 901.6999999999999,560.4 862.3,560.4" fill="none" stroke="#111" stroke-width="1.2" />
<path d="M861.6999999999999,513.0 C859.8,514.0 858.5999999999999,515.4000000000001 858.5999999999999,517.2 C858.5999999999999,519.0 859.8,520.4000000000001 861.6999999999999,521.4000000000001" fill="none" stroke="#333" stroke-width="0.95"/>
<polyline points="866.5,513.5 862.5,517.2 866.5,520.9000000000001" fill="none" stroke="#222" stroke-width="0.9" />
<path d="M861.6999999999999,550.0 C859.8,551.0 858.5999999999999,552.4000000000001 858.5999999999999,554.2 C858.5999999999999,556.0 859.8,557.4000000000001 861.6999999999999,558.4000000000001" fill="none" stroke="#333" stroke-width="0.95"/>
<polyline points="866.5,550.5 862.5,554.2 866.5,557.9000000000001" fill="none" stroke="#222" stroke-width="0.9" />
<polyline points="862.6,517.2 883.5,517.2 883.5,524.1" fill="none" stroke="#222" stroke-width="0.95" />
<polyline points="862.6,554.2 883.5,554.2 883.5,545.3" fill="none" stroke="#222" stroke-width="0.95" />
<polyline points="883.5,524.1 886.3,525.8 881,528.6 886.3,531.3 881,534 886.3,536.7 881,539.4 886.3,542.1 881,544.2 883.5,545.3" fill="none" stroke="#222" stroke-width="0.8" />
<line x1="879" y1="542.4" x2="888.6" y2="528.4" stroke="#000" stroke-width="0.9" />
<path d="M889.6,526.8 L889,531.2 L886,529.2 Z" fill="#000"/>
<text x="816.9" y="515.15" text-anchor="start" font-size="7.35" >TAN</text>
<text x="849.3" y="515.45" text-anchor="start" font-size="7.35" >A</text>
<text x="816.9" y="552.05" text-anchor="start" font-size="7.35" >YEL</text>
<text x="849.3" y="552.15" text-anchor="start" font-size="7.35" >B</text>
<text x="901.5" y="570.15" text-anchor="end" font-size="7.35" >ENGINE COOLANT</text>
<text x="903.4" y="579.15" text-anchor="end" font-size="7.35" >TEMPERATURE SENSOR</text>
<text x="901.8" y="588.25" text-anchor="end" font-size="7.35" >(2.4L: RIGHT REAR ENGINE)</text>
<text x="904" y="597.25" text-anchor="end" font-size="7.35" >(3.0L: LEFT CYLINDER HEAD)</text>
<rect x="862.3" y="608.3" width="39.4" height="51" fill="#dcdcfe" stroke="#55556a" stroke-width="1" />
<polyline points="901.6999999999999,608.3 901.6999999999999,659.3 862.3,659.3" fill="none" stroke="#111" stroke-width="1.2" />
<path d="M861.6999999999999,611.4 C859.8,612.4 858.5999999999999,613.8000000000001 858.5999999999999,615.6 C858.5999999999999,617.4 859.8,618.8000000000001 861.6999999999999,619.8000000000001" fill="none" stroke="#333" stroke-width="0.95"/>
<polyline points="866.5,611.9 862.5,615.6 866.5,619.3000000000001" fill="none" stroke="#222" stroke-width="0.9" />
<path d="M861.6999999999999,648.4 C859.8,649.4 858.5999999999999,650.8000000000001 858.5999999999999,652.6 C858.5999999999999,654.4 859.8,655.8000000000001 861.6999999999999,656.8000000000001" fill="none" stroke="#333" stroke-width="0.95"/>
<polyline points="866.5,648.9 862.5,652.6 866.5,656.3000000000001" fill="none" stroke="#222" stroke-width="0.9" />
<polyline points="862.6,615.6 883.5,615.6 883.5,623.4" fill="none" stroke="#222" stroke-width="0.95" />
<polyline points="862.6,652.6 895.5,652.6 895.5,644.2" fill="none" stroke="#222" stroke-width="0.95" />
<circle cx="883.5" cy="623.4" r="1.6" fill="#000" stroke="#000" stroke-width="0"/>
<circle cx="895.5" cy="644.2" r="1.6" fill="#000" stroke="#000" stroke-width="0"/>
<circle cx="871.6" cy="644.2" r="1.6" fill="#000" stroke="#000" stroke-width="0"/>
<line x1="883.5" y1="623.4" x2="895.5" y2="644.2" stroke="#000" stroke-width="0.9" />
<path d="M894.4,642.3 L890.6,638.7 L893.8,636.9 Z" fill="#000"/>
<text x="816.9" y="613.35" text-anchor="start" font-size="7.35" >TAN</text>
<text x="849.3" y="613.35" text-anchor="start" font-size="7.35" >B</text>
<line x1="748.2" y1="652.6" x2="859.6" y2="652.6" stroke="#a38f55" stroke-width="1.4" />
<text x="800.2" y="650.65" text-anchor="start" font-size="7.35" >TAN/BLK</text>
<text x="849.3" y="650.65" text-anchor="start" font-size="7.35" >A</text>
<text x="726" y="655.05" text-anchor="start" font-size="7.35" >3.0L</text>
<text x="726" y="729.15" text-anchor="start" font-size="7.35" >2.4L</text>
<text x="901.5" y="668.65" text-anchor="end" font-size="7.35" >ENGINE OIL</text>
<text x="903.4" y="678.05" text-anchor="end" font-size="7.35" >PRESSURE SWITCH</text>
<text x="904" y="687.35" text-anchor="end" font-size="7.35" >(LEFT FRONT OF ENGINE)</text>
<path d="M748.4,646.4 Q745.6,647.6 745.6,650.6 L745.6,686 Q745.6,688.6 742.3,689.6 Q745.6,690.6 745.6,693.2 L745.6,728.2 Q745.6,731.2 748.4,732.4" fill="none" stroke="#444" stroke-width="0.95"/>
<text x="702" y="687.35" text-anchor="start" font-size="7.35" >TAN/BLK</text>
<line x1="748.2" y1="726.5" x2="859.6" y2="726.5" stroke="#a38f55" stroke-width="1.4" />
<text x="800.2" y="724.25" text-anchor="start" font-size="7.35" >TAN/BLK</text>
<text x="849.3" y="724.25" text-anchor="start" font-size="7.35" >A</text>
<rect x="863.7" y="708.3" width="39.9" height="34.9" fill="#dcdcfe" stroke="#111" stroke-width="1.05" />
<path d="M861.8,722.3 C859.9,723.3 858.6999999999999,724.7 858.6999999999999,726.5 C858.6999999999999,728.3 859.9,729.7 861.8,730.7" fill="none" stroke="#333" stroke-width="0.95"/>
<polyline points="867.9000000000001,722.8 863.9000000000001,726.5 867.9000000000001,730.2" fill="none" stroke="#222" stroke-width="0.9" />
<line x1="864" y1="726.5" x2="873.3" y2="726.5" stroke="#000" stroke-width="1" />
<circle cx="873.3" cy="726.5" r="1.6" fill="#000" stroke="#000" stroke-width="0"/>
<circle cx="894.2" cy="714.5" r="1.6" fill="#000" stroke="#000" stroke-width="0"/>
<circle cx="894.2" cy="738.5" r="1.6" fill="#000" stroke="#000" stroke-width="0"/>
<circle cx="903.6" cy="714.5" r="1.7" fill="#000" stroke="#000" stroke-width="0"/>
<line x1="873.3" y1="726.5" x2="894.2" y2="714.5" stroke="#000" stroke-width="0.9" />
<path d="M891.4,716.1 L887.6,719.9 L885.9,716.8 Z" fill="#000"/>
<line x1="894.2" y1="714.5" x2="903.6" y2="714.5" stroke="#000" stroke-width="1.1" />
<line x1="905.8" y1="709" x2="905.8" y2="719.6" stroke="#909090" stroke-width="1.4" />
<line x1="907.8" y1="710.8" x2="907.8" y2="718" stroke="#a0a0a0" stroke-width="1.3" />
<line x1="909.8" y1="712.6" x2="909.8" y2="716.2" stroke="#909090" stroke-width="1.4" />
<line x1="904" y1="714.4" x2="910.4" y2="714.4" stroke="#999" stroke-width="1" />
<text x="901.5" y="752.05" text-anchor="end" font-size="7.35" >ENGINE OIL</text>
<text x="903.3" y="761.15" text-anchor="end" font-size="7.35" >PRESSURE SWITCH</text>
<text x="904" y="770.85" text-anchor="end" font-size="7.35" >(LEFT ENGINE BLOCK)</text>
</g>
<path d="M21.5,812.3 L914.5,812.3" fill="none" stroke="#808080" stroke-width="1.1"/><path d="M21.6,91 L21.6,812.5 M914.6,91 L914.6,812.5" fill="none" stroke="#000" stroke-width="1.1"/>
</svg>
</body></html>
